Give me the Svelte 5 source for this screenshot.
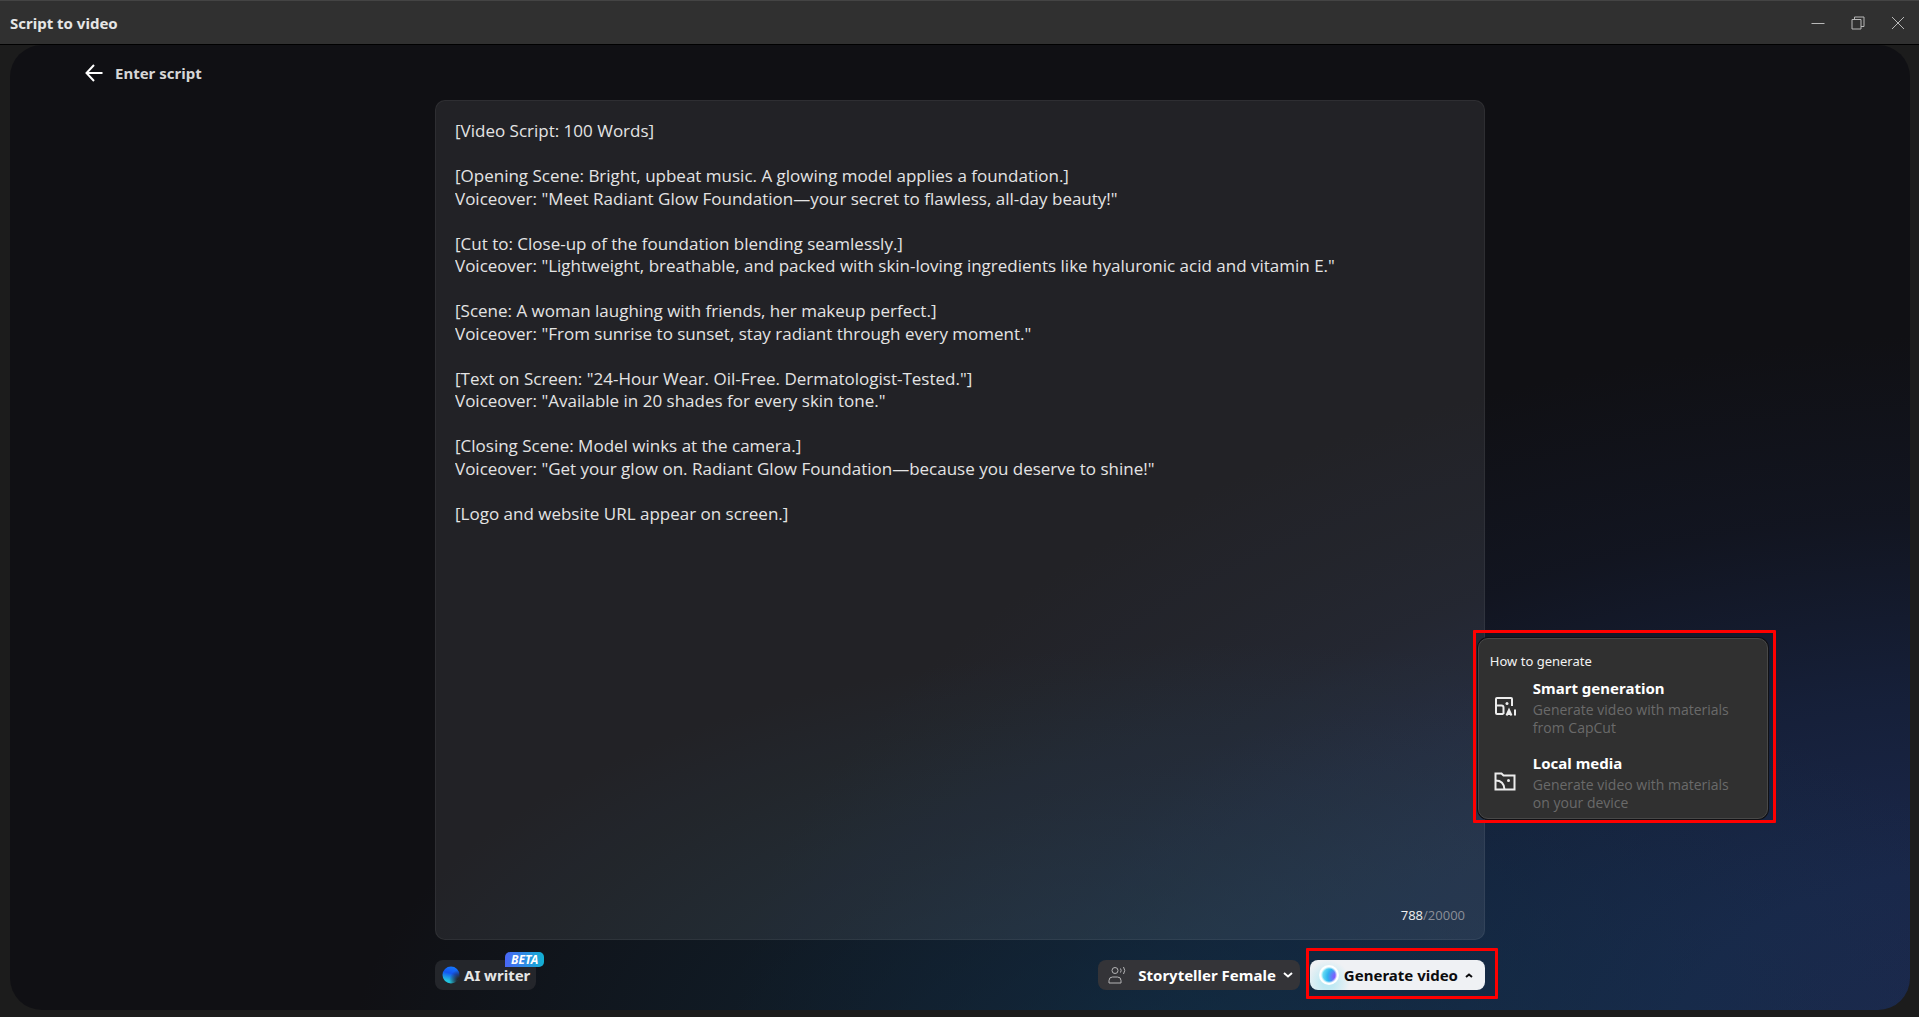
<script>
  let script = $state(`[Video Script: 100 Words]

[Opening Scene: Bright, upbeat music. A glowing model applies a foundation.]
Voiceover: "Meet Radiant Glow Foundation—your secret to flawless, all-day beauty!"

[Cut to: Close-up of the foundation blending seamlessly.]
Voiceover: "Lightweight, breathable, and packed with skin-loving ingredients like hyaluronic acid and vitamin E."

[Scene: A woman laughing with friends, her makeup perfect.]
Voiceover: "From sunrise to sunset, stay radiant through every moment."

[Text on Screen: "24-Hour Wear. Oil-Free. Dermatologist-Tested."]
Voiceover: "Available in 20 shades for every skin tone."

[Closing Scene: Model winks at the camera.]
Voiceover: "Get your glow on. Radiant Glow Foundation—because you deserve to shine!"

[Logo and website URL appear on screen.]`);
  const used = 788;
  const limit = 20000;
</script>

<div class="window">
  <header class="titlebar">
    <h1>Script to video</h1>
    <div class="controls">
      <button aria-label="Minimize">
        <svg viewBox="0 0 14 14"><path d="M0.500 7.500h13" /></svg>
      </button>
      <button aria-label="Restore">
        <svg viewBox="0 0 14 14"><path d="M1 3.500h9v9.500H1zM3.500 3.500V1H13v9.500h-3" /></svg>
      </button>
      <button aria-label="Close">
        <svg viewBox="0 0 14 14"><path d="M1 1l12 12M13 1L1 13" /></svg>
      </button>
    </div>
  </header>

  <main class="stage">
    <div class="crumb">
      <button class="back" aria-label="Back">
        <svg viewBox="0 0 18 18"><path d="M17.500 9H1.500M9 1L1.500 9L9 17" /></svg>
      </button>
      <h2>Enter script</h2>
    </div>

    <div class="column">
      <section class="card">
        <textarea aria-label="Script" spellcheck="false" bind:value={script}></textarea>
        <p class="count"><span>{used}</span>/{limit}</p>
      </section>

      <div class="toolbar">
        <button class="writer">
          <svg class="orb" viewBox="0 0 18 18">
            <defs>
              <linearGradient id="orb-fill" x1="0.6" y1="0" x2="0.35" y2="1">
                <stop offset="0" stop-color="#1478ff" />
                <stop offset="0.4" stop-color="#1455f0" />
                <stop offset="0.85" stop-color="#22c4e0" />
              </linearGradient>
              <radialGradient id="orb-shade" cx="1" cy="0.8" r="0.6">
                <stop offset="0.25" stop-color="#24262b" />
                <stop offset="1" stop-color="#24262b" stop-opacity="0" />
              </radialGradient>
            </defs>
            <circle cx="9" cy="9" r="8.500" fill="url(#orb-fill)" />
            <circle cx="9" cy="9" r="9" fill="url(#orb-shade)" />
          </svg>
          AI writer
          <span class="beta">BETA</span>
        </button>

        <div class="actions">
          <button class="voice">
            <svg class="person" viewBox="0 0 18 18">
              <circle cx="7" cy="4.500" r="3" />
              <path d="M1 17v-2.500a3.500 3.500 0 0 1 3.500-3.500h5a3.500 3.500 0 0 1 3.500 3.500V17z" />
              <path d="M12.500 2.500q1.300 2 0 4M15.500 1q2.500 3.500 0 7" />
            </svg>
            Storyteller Female
            <svg class="chevron" viewBox="0 0 10 6"><path d="M1 1l4 3.500L9 1" /></svg>
          </button>
          <div class="generate-wrap">
            <button class="generate" aria-expanded="true">
              <svg class="bubble" viewBox="0 0 20 20">
                <defs>
                  <radialGradient id="bubble-fill" cx="0.9" cy="0.6" r="0.8">
                    <stop offset="0" stop-color="#8a4cff" />
                    <stop offset="0.25" stop-color="#6f6dfb" />
                    <stop offset="0.6" stop-color="#2fb4ee" />
                    <stop offset="1" stop-color="#6fe2f5" />
                  </radialGradient>
                  <radialGradient id="bubble-edge">
                    <stop offset="0.6" stop-color="#fff" stop-opacity="0" />
                    <stop offset="0.82" stop-color="#fff" />
                  </radialGradient>
                </defs>
                <circle cx="10" cy="10" r="9" fill="url(#bubble-fill)" />
                <circle cx="10" cy="10" r="10" fill="url(#bubble-edge)" />
              </svg>
              Generate video
              <svg class="caret" viewBox="0 0 8 5"><path d="M1 4l3-2.500L7 4" /></svg>
            </button>

            <div class="menu" role="menu">
              <h3>How to generate</h3>
              <button class="option" role="menuitem">
                <svg viewBox="0 0 22 20">
                  <path d="M9.500 17H3Q2 17 2 16V2Q2 1 3 1h14Q18 1 18 2v7" />
                  <path d="M2 8.500h5.500Q9.500 8.500 9.500 10.500V17" />
                  <circle cx="13" cy="6.500" r="1.500" class="dot" />
                  <path d="M12.500 18.500l2.500-5.500 2.500 5.500M13.500 17h3M21 12.500v6" />
                </svg>
                <span class="copy">
                  <strong>Smart generation</strong>
                  <span>Generate video with materials from CapCut</span>
                </span>
              </button>
              <button class="option" role="menuitem">
                <svg viewBox="0 0 22 20">
                  <path d="M1.500 17.500v-16h6l2 2h11v14z" />
                  <path d="M1.500 8.500q8.500 0 9 9" />
                  <circle cx="14.500" cy="8.500" r="1.500" class="dot" />
                </svg>
                <span class="copy">
                  <strong>Local media</strong>
                  <span>Generate video with materials on your device</span>
                </span>
              </button>
            </div>
          </div>
        </div>
      </div>
    </div>
  </main>
</div>

<style>
  :global(body) {
    margin: 0;
    background: #1c1c1c;
  }

  .window {
    box-sizing: border-box;
    display: flex;
    flex-direction: column;
    min-height: 100vh;
    padding-bottom: 7px;
    background: #1c1c1c;
    color: #e6e6e6;
    font-family: "Noto Sans", "Open Sans", sans-serif;
  }

  h1, h2, h3, p {
    margin: 0;
  }

  button {
    padding: 0;
    border: 0;
    background: none;
    color: inherit;
    font: inherit;
    cursor: pointer;
  }

  svg {
    display: block;
    flex: none;
    fill: none;
    stroke: currentColor;
  }

  .titlebar {
    box-sizing: border-box;
    display: flex;
    align-items: center;
    justify-content: space-between;
    height: 45px;
    padding: 0 14px 0 10px;
    border-top: 1px solid #444;
    border-bottom: 1px solid #000;
    background: #303030;
  }

  h1, h2 {
    font-size: 15px;
    font-weight: 700;
    line-height: 20px;
  }

  .controls {
    display: flex;
    gap: 26px;
    color: #b8b8b8;
  }

  .controls svg {
    width: 14px;
    height: 14px;
  }

  .stage {
    display: flex;
    flex: 1;
    flex-direction: column;
    margin: 0 9px 0 10px;
    border-radius: 32px;
    background:
      radial-gradient(ellipse 46% 42% at 64% 104%, rgba(17, 50, 74, 0.7), transparent),
      radial-gradient(ellipse 66% 74% at 104% 104%, #1e284e 0%, #1a274a 25%, rgba(24, 38, 72, 0.7) 50%, rgba(22, 32, 60, 0.3) 75%, transparent 100%),
      #101014;
  }

  .crumb {
    display: flex;
    align-items: center;
    gap: 12px;
    height: 55px;
    padding-left: 75px;
    color: #d6d6d6;
  }

  .back {
    color: #fff;
  }

  .back svg {
    width: 18px;
    height: 18px;
    stroke-width: 2;
  }

  .column {
    display: flex;
    flex: 1;
    flex-direction: column;
    width: 1050px;
    max-width: 90%;
    margin: 0 auto;
  }

  .card {
    box-sizing: border-box;
    display: flex;
    flex: 1;
    flex-direction: column;
    padding: 19px 19px 14px;
    border: 1px solid rgba(255, 255, 255, 0.06);
    border-radius: 10px;
    background: rgba(255, 255, 255, 0.08);
  }

  textarea {
    flex: 1;
    padding: 0;
    border: 0;
    outline: 0;
    background: transparent;
    color: #e4e4e4;
    font-family: "Open Sans", "Noto Sans", sans-serif;
    font-size: 17px;
    line-height: 1.325;
    resize: none;
  }

  .count {
    color: #8b8f98;
    font-family: "Open Sans", "Noto Sans", sans-serif;
    font-size: 13px;
    line-height: 20px;
    text-align: right;
  }

  .count span {
    color: #f0f0f0;
  }

  .toolbar {
    display: flex;
    align-items: center;
    justify-content: space-between;
    padding: 20px 0;
  }

  .actions {
    display: flex;
    gap: 10px;
  }

  .writer, .voice, .generate {
    display: flex;
    align-items: center;
    height: 30px;
    border-radius: 8px;
    font-size: 15px;
    font-weight: 700;
    white-space: nowrap;
  }

  .writer {
    position: relative;
    gap: 4px;
    padding: 0 6px 0 7px;
    background: #24262b;
  }

  .orb {
    width: 18px;
    height: 18px;
    stroke: none;
  }

  .beta {
    position: absolute;
    top: -8px;
    right: -8px;
    padding: 0 6px;
    border-radius: 5px 5px 5px 0;
    background: linear-gradient(90deg, #4a66f5, #12b0d2);
    color: #fff;
    font-size: 12px;
    font-style: italic;
    line-height: 15px;
  }

  .voice {
    gap: 7px;
    padding: 0 7px 0 10px;
    background: #343438;
    color: #fff;
  }

  .person {
    width: 18px;
    height: 18px;
    margin-right: 5px;
    color: #b4b4b6;
  }

  .chevron {
    width: 10px;
    height: 6px;
    stroke-width: 2;
  }

  .generate-wrap {
    position: relative;
  }

  .generate {
    gap: 5px;
    padding: 0 12px 0 9px;
    background: radial-gradient(circle at 18px 22px, #bfe9f3 6px, #eff1f4 22px);
    color: #0c0c0e;
  }

  .bubble {
    width: 20px;
    height: 20px;
    stroke: none;
  }

  .caret {
    width: 8px;
    height: 5px;
    margin-left: 2px;
    stroke-width: 2;
  }

  .generate-wrap::after, .menu::after {
    position: absolute;
    border: 3px solid #f00;
    border-radius: 1px;
    content: "";
    pointer-events: none;
  }

  .generate-wrap::after {
    inset: -12px -13px -9px -4px;
  }

  .menu {
    position: absolute;
    bottom: 171px;
    left: 168px;
    box-sizing: border-box;
    width: 290px;
    padding: 11px 11px 6px;
    border: 1px solid #484848;
    border-radius: 10px;
    background: #303030;
    box-shadow: 0 0 0 1px #101014;
  }

  .menu::after {
    inset: -9px -9px -5px -6px;
  }

  h3 {
    margin-bottom: 3px;
    color: #f2f2f2;
    font-size: 13px;
    font-weight: 400;
    line-height: 22px;
  }

  .option {
    display: flex;
    align-items: center;
    gap: 17px;
    width: 100%;
    padding: 2px 0 0 4px;
    color: #ececec;
    text-align: left;
  }

  .option + .option {
    margin-top: 13px;
  }

  .option svg {
    width: 22px;
    height: 20px;
    stroke-width: 2;
  }

  .dot {
    fill: currentColor;
    stroke: none;
  }

  .copy {
    display: block;
    width: 210px;
    color: #6a6a6a;
    font-family: "Open Sans", "Noto Sans", sans-serif;
    font-size: 14px;
    line-height: 18px;
  }

  .copy strong {
    display: block;
    margin-bottom: 2px;
    color: #fff;
    font-family: "Noto Sans", sans-serif;
    font-size: 15px;
    line-height: 22px;
  }
</style>
